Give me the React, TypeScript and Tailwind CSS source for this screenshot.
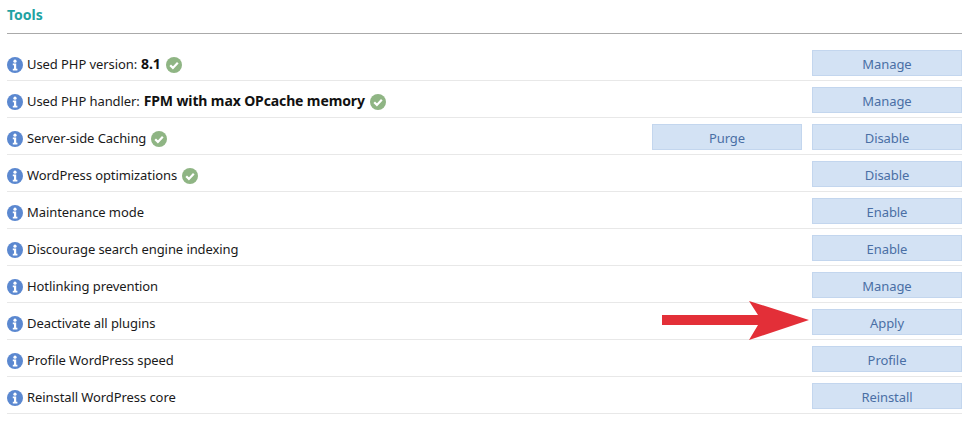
import React from "react";

interface Tool {
    label: string;
    value?: string;
    ok?: boolean;
    actions: string[];
}

const tools: Tool[] = [
    { label: "Used PHP version:", value: "8.1", ok: true, actions: ["Manage"] },
    { label: "Used PHP handler:", value: "FPM with max OPcache memory", ok: true, actions: ["Manage"] },
    { label: "Server-side Caching", ok: true, actions: ["Purge", "Disable"] },
    { label: "WordPress optimizations", ok: true, actions: ["Disable"] },
    { label: "Maintenance mode", actions: ["Enable"] },
    { label: "Discourage search engine indexing", actions: ["Enable"] },
    { label: "Hotlinking prevention", actions: ["Manage"] },
    { label: "Deactivate all plugins", actions: ["Apply"] },
    { label: "Profile WordPress speed", actions: ["Profile"] },
    { label: "Reinstall WordPress core", actions: ["Reinstall"] },
];

function InfoIcon() {
    return (
        <svg width="16" height="16" viewBox="0 0 16 16" className="shrink-0">
            <circle cx="8" cy="8" r="8" fill="#5b88d0" />
            <circle cx="8" cy="4.2" r="1.6" fill="#fff" />
            <path d="M5.8 6.6h3.4v5.2h1.2v1.6H5.8v-1.6h1.2V8.2H5.8z" fill="#fff" />
        </svg>
    );
}

function CheckIcon() {
    return (
        <svg width="16" height="16" viewBox="0 0 16 16" className="shrink-0">
            <circle cx="8" cy="8" r="8" fill="#8fb584" />
            <path d="M4.2 8.2l2.7 2.7 4.9-5.2" fill="none" stroke="#fff" strokeWidth="2.2" />
        </svg>
    );
}

export default function App() {
    return (
        <div className="relative w-[975px] h-[425px] bg-white pl-[7px] pr-[13px] text-[13px] tracking-[-0.08px] text-[#1a1a1a] font-['Noto_Sans','DejaVu_Sans',sans-serif] overflow-hidden">
            <div className="h-[34px] border-b border-[#aaaaaa] pt-[5px] text-[14px] leading-[20px] font-bold tracking-normal text-[#1fa3a3]">
                Tools
            </div>
            <div className="mt-[10px]">
                {tools.map((tool) => (
                    <div
                        key={tool.label}
                        className="flex items-start h-[37px] border-b border-[#e8e8e8] pt-[6px]"
                    >
                        <div className="flex items-center h-[29px] gap-[5px] flex-1">
                            <InfoIcon />
                            <span className="-ml-[1px] mb-[1px] leading-[20px]">
                                {tool.label}
                                {tool.value && (
                                    <b className="ml-[4px] text-[14px] leading-[14px] tracking-[-0.12px] text-[#111]">{tool.value}</b>
                                )}
                            </span>
                            {tool.ok && <CheckIcon />}
                        </div>
                        <div className="flex gap-[10px]">
                            {tool.actions.map((action) => (
                                <button
                                    key={action}
                                    className="w-[150px] h-[26px] pt-[3px] bg-[#d3e2f4] border border-[#c3d6ee] text-[13px] text-[#4a6fa5]"
                                >
                                    {action}
                                </button>
                            ))}
                        </div>
                    </div>
                ))}
            </div>
            {/* red annotation arrow pointing at Apply */}
            <svg width="150" height="44" viewBox="0 0 150 44" className="absolute left-[660px] top-[298px]">
                <polygon points="2,17 98,17 89,3 149,22 89,42 98,27 2,27" fill="#e32f38" />
            </svg>
        </div>
    );
}
